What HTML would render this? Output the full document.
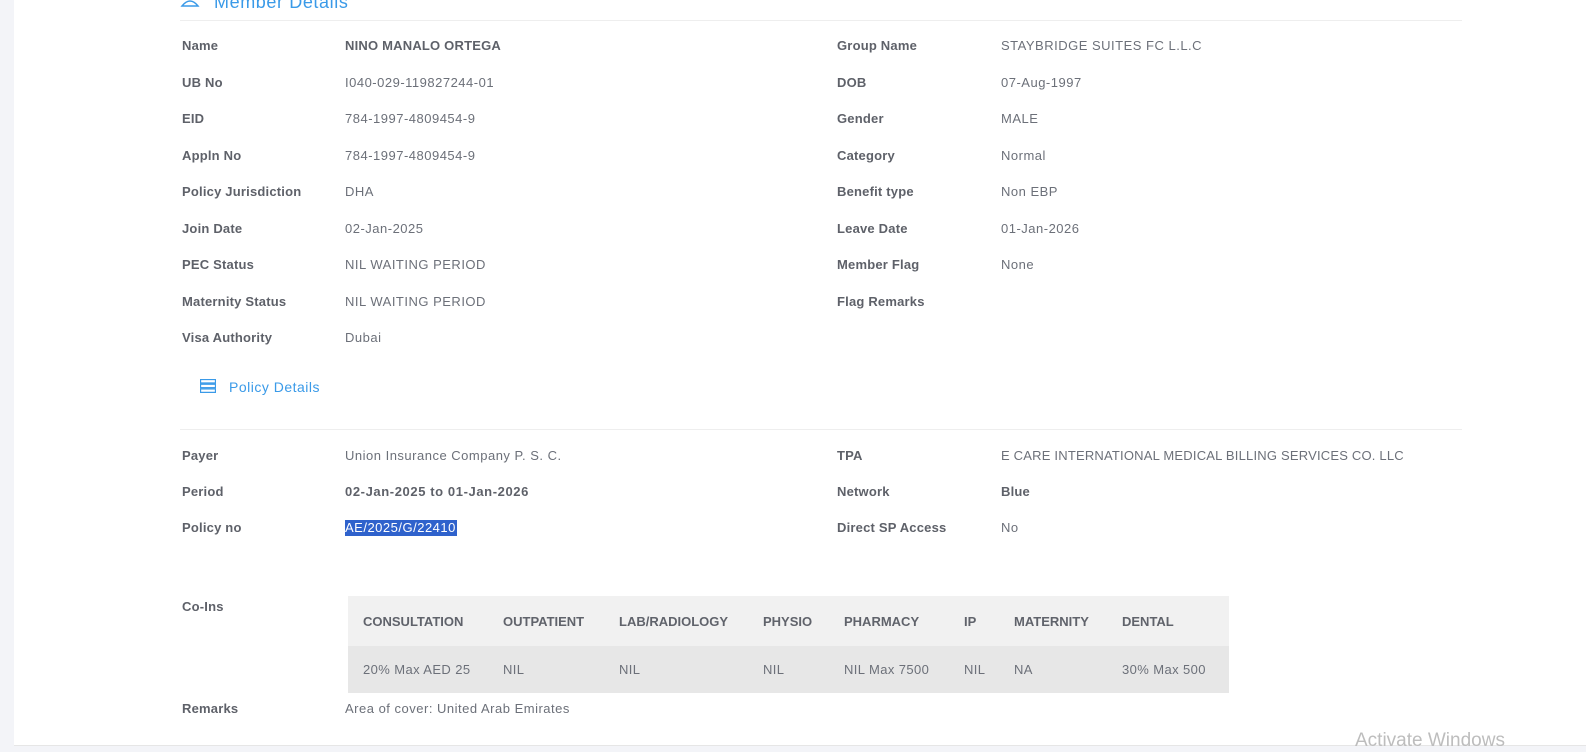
<!DOCTYPE html>
<html><head><meta charset="utf-8"><style>
body{margin:0;width:1586px;height:750px;overflow:hidden;background:#f3f4f8;font-family:"Liberation Sans",sans-serif;position:relative}
.card{position:absolute;left:14px;top:-10px;width:1572px;height:755px;background:#fff;border-bottom:1px solid #e6e6e6}
.t{position:absolute;font-size:13px;line-height:16px;color:#6c7079;white-space:nowrap;transform:translateY(-7px);letter-spacing:0.5px}
.l{font-weight:bold;color:#5e6169;letter-spacing:0.2px}
.b{font-weight:bold;color:#5e6169;letter-spacing:0.2px}
.hr{position:absolute;height:1px;background:#eeeeee}
table{position:absolute;left:348px;top:596px;width:881px;border-collapse:collapse;font-size:13px;table-layout:fixed}
th{background:#f1f1f1;height:50px;text-align:left;color:#60636b;font-weight:bold;padding:0;white-space:nowrap}
td{background:#e7e7e7;height:47px;color:#6c7079;padding:0;letter-spacing:0.4px;white-space:nowrap}
</style></head><body>
<div class="card"></div>
<svg style="position:absolute;left:180px;top:-8px" width="20" height="16" viewBox="0 0 20 16"><path d="M2 14 Q10 4 18 14 Z" fill="none" stroke="#3a9ae8" stroke-width="1.5"/></svg>
<div class="t" style="left:214px;top:-1px;font-size:18px;line-height:20px;color:#3a9ae8;letter-spacing:0.6px">Member Details</div>
<div class="hr" style="left:180px;top:20px;width:1282px"></div>

<div class="t l" style="left:182px;top:45px">Name</div><div class="t b" style="left:345px;top:45px">NINO MANALO ORTEGA</div>
<div class="t l" style="left:182px;top:82px">UB No</div><div class="t" style="left:345px;top:82px">I040-029-119827244-01</div>
<div class="t l" style="left:182px;top:118px">EID</div><div class="t" style="left:345px;top:118px">784-1997-4809454-9</div>
<div class="t l" style="left:182px;top:155px">Appln No</div><div class="t" style="left:345px;top:155px">784-1997-4809454-9</div>
<div class="t l" style="left:182px;top:191px">Policy Jurisdiction</div><div class="t" style="left:345px;top:191px">DHA</div>
<div class="t l" style="left:182px;top:228px">Join Date</div><div class="t" style="left:345px;top:228px">02-Jan-2025</div>
<div class="t l" style="left:182px;top:264px">PEC Status</div><div class="t" style="left:345px;top:264px">NIL WAITING PERIOD</div>
<div class="t l" style="left:182px;top:301px">Maternity Status</div><div class="t" style="left:345px;top:301px">NIL WAITING PERIOD</div>
<div class="t l" style="left:182px;top:337px">Visa Authority</div><div class="t" style="left:345px;top:337px">Dubai</div>

<div class="t l" style="left:837px;top:45px">Group Name</div><div class="t" style="left:1001px;top:45px">STAYBRIDGE SUITES FC L.L.C</div>
<div class="t l" style="left:837px;top:82px">DOB</div><div class="t" style="left:1001px;top:82px">07-Aug-1997</div>
<div class="t l" style="left:837px;top:118px">Gender</div><div class="t" style="left:1001px;top:118px">MALE</div>
<div class="t l" style="left:837px;top:155px">Category</div><div class="t" style="left:1001px;top:155px">Normal</div>
<div class="t l" style="left:837px;top:191px">Benefit type</div><div class="t" style="left:1001px;top:191px">Non EBP</div>
<div class="t l" style="left:837px;top:228px">Leave Date</div><div class="t" style="left:1001px;top:228px">01-Jan-2026</div>
<div class="t l" style="left:837px;top:264px">Member Flag</div><div class="t" style="left:1001px;top:264px">None</div>
<div class="t l" style="left:837px;top:301px">Flag Remarks</div>

<svg style="position:absolute;left:200px;top:379px" width="16" height="14" viewBox="0 0 16 14"><g fill="none" stroke="#3a9ae8" stroke-width="1.3"><rect x="0.5" y="0.5" width="15" height="3.5"/><rect x="0.5" y="5.2" width="15" height="3.5"/><rect x="0.5" y="9.9" width="15" height="3.5"/></g></svg>
<div class="t" style="left:229px;top:386px;font-size:14px;color:#3a9ae8;letter-spacing:0.5px">Policy Details</div>
<div class="hr" style="left:180px;top:429px;width:1282px"></div>

<div class="t l" style="left:182px;top:455px">Payer</div><div class="t" style="left:345px;top:455px">Union Insurance Company P. S. C.</div>
<div class="t l" style="left:182px;top:491px">Period</div><div class="t b" style="left:345px;top:491px;letter-spacing:0.6px">02-Jan-2025 to 01-Jan-2026</div>
<div class="t l" style="left:182px;top:527px">Policy no</div><div class="t" style="left:345px;top:527px;background:#2f62cc;color:#fff;padding-right:1px">AE/2025/G/22410</div>
<div class="t l" style="left:837px;top:455px">TPA</div><div class="t" style="left:1001px;top:455px;letter-spacing:0.2px">E CARE INTERNATIONAL MEDICAL BILLING SERVICES CO. LLC</div>
<div class="t l" style="left:837px;top:491px">Network</div><div class="t b" style="left:1001px;top:491px">Blue</div>
<div class="t l" style="left:837px;top:527px">Direct SP Access</div><div class="t" style="left:1001px;top:527px">No</div>

<div class="t l" style="left:182px;top:606px">Co-Ins</div>
<table><colgroup><col style="width:155px"><col style="width:116px"><col style="width:144px"><col style="width:81px"><col style="width:120px"><col style="width:50px"><col style="width:108px"><col></colgroup><tr>
<th style="padding-left:15px">CONSULTATION</th><th>OUTPATIENT</th><th>LAB/RADIOLOGY</th><th>PHYSIO</th><th>PHARMACY</th><th>IP</th><th>MATERNITY</th><th>DENTAL</th></tr>
<tr><td style="padding-left:15px">20% Max AED 25</td><td>NIL</td><td>NIL</td><td>NIL</td><td>NIL Max 7500</td><td>NIL</td><td>NA</td><td>30% Max 500</td></tr></table>
<div class="t l" style="left:182px;top:708px">Remarks</div><div class="t" style="left:345px;top:708px">Area of cover: United Arab Emirates</div>
<div class="t" style="left:1355px;top:741px;font-size:19px;line-height:22px;color:#bdbdbd;transform:translateY(-11px);letter-spacing:0">Activate Windows</div>
</body></html>
